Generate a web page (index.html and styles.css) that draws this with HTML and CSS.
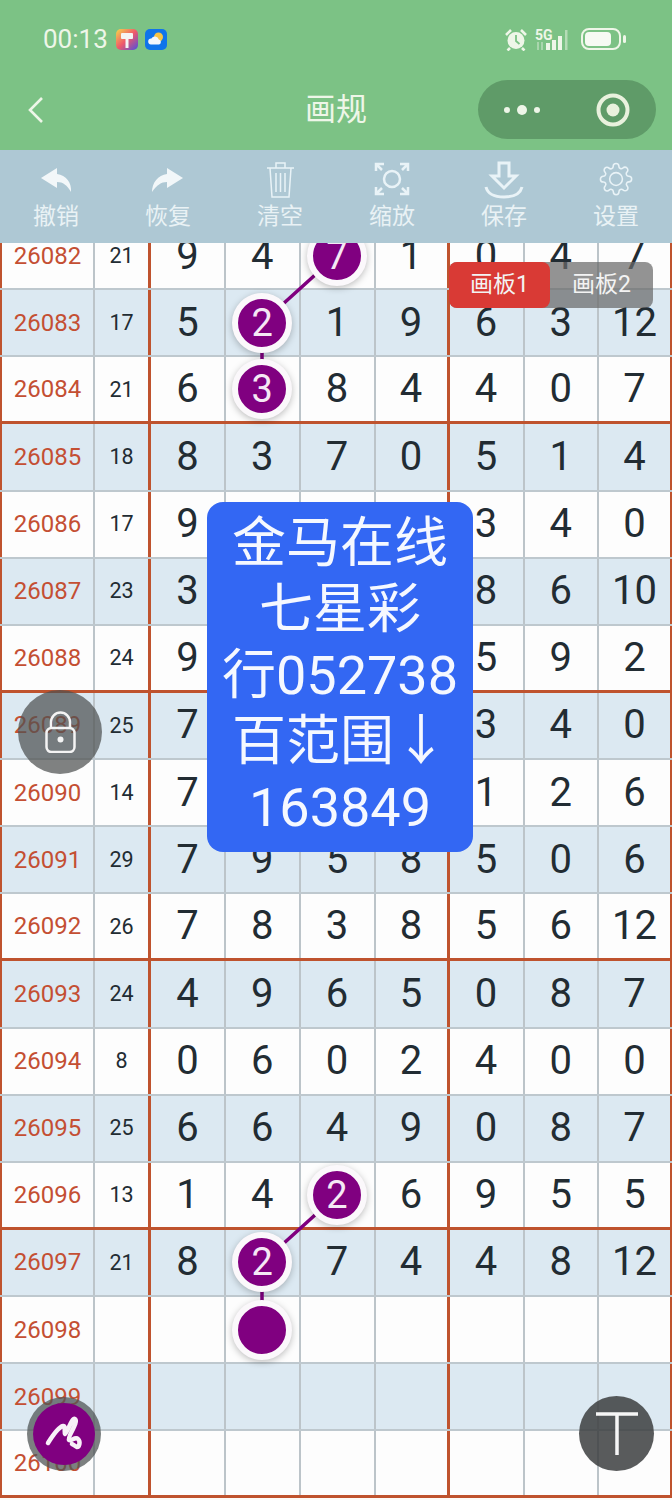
FILE: index.html
```html
<!DOCTYPE html>
<html lang="zh">
<head>
  <meta charset="UTF-8" />
  <title>画规</title>
  <link rel="stylesheet" href="styles.css">
</head>
<body>
  <div class="page">
    <div class="header">
      <div class="status">
        <div class="status-left">
          <span class="time">00:13</span>
          <svg class="app-icon" width="22" height="21" viewBox="0 0 22 21">
            <defs>
              <linearGradient id="appGrad" x1="0" y1="0" x2="1" y2="1">
                <stop offset="0" stop-color="#f5d94a"/>
                <stop offset="0.5" stop-color="#f0586a"/>
                <stop offset="1" stop-color="#4a50e0"/>
              </linearGradient>
            </defs>
            <rect width="22" height="21" rx="5" fill="url(#appGrad)"/>
            <rect x="5" y="4" width="12" height="6" rx="1" fill="#f4f4f4"/>
            <rect x="9.500" y="10" width="3" height="9" fill="#f4f4f4"/>
          </svg>
          <svg class="app-icon" width="22" height="21" viewBox="0 0 22 21">
            <rect width="22" height="21" rx="5" fill="#0f74ea"/>
            <circle cx="13.500" cy="8" r="4.500" fill="#f6c445"/>
            <path d="M6 15.500a3 3 0 0 1 .4-6 4 4 0 0 1 7.400 1 2.600 2.600 0 0 1 .4 5z" fill="#f2f7fc"/>
          </svg>
        </div>
        <div class="status-right">
          <svg width="22" height="23" viewBox="0 0 22 23">
            <circle cx="11" cy="12.500" r="8.500" fill="#eef6e8"/>
            <path d="M11 7v6l3.500 3" fill="none" stroke="#7cc285" stroke-width="1.800"/>
            <path d="M1 7l5-5M21 7l-5-5M5 20l-2.500 2.500M17 20l2.500 2.500" stroke="#eef6e8" stroke-width="2.600"/>
          </svg>
          <svg width="38" height="23" viewBox="0 0 38 23">
            <text x="0" y="12" class="net-label">5G</text>
            <g fill="#eef6e8">
              <rect x="11" y="15" width="4" height="7"/>
              <rect x="17" y="12" width="4" height="10"/>
              <rect x="23" y="8" width="4" height="14"/>
              <rect x="30" y="2" width="2.500" height="20" opacity="0.5"/>
              <rect x="2" y="14" width="2" height="8" opacity="0.4"/>
              <rect x="6" y="14" width="2" height="8" opacity="0.4"/>
            </g>
          </svg>
          <svg width="46" height="22" viewBox="0 0 46 22">
            <rect x="1" y="1" width="38" height="20" rx="7" fill="none" stroke="#eef6e8" stroke-width="2"/>
            <rect x="4" y="4" width="26" height="14" rx="4" fill="#f6faf3"/>
            <rect x="42" y="7" width="3" height="8" rx="1.500" fill="#eef6e8"/>
          </svg>
        </div>
      </div>
      <div class="nav">
        <svg class="back" width="18" height="28" viewBox="0 0 18 28">
          <path d="M15 2L3 14l12 12" fill="none" stroke="#eef6e8" stroke-width="2.600"/>
        </svg>
        <div class="title">画规</div>
        <div class="capsule">
          <svg width="40" height="12" viewBox="0 0 40 12">
            <circle cx="5" cy="6" r="3" fill="#eef6e8"/>
            <circle cx="20" cy="6" r="5" fill="#eef6e8"/>
            <circle cx="35" cy="6" r="3" fill="#eef6e8"/>
          </svg>
          <svg width="34" height="34" viewBox="0 0 34 34">
            <circle cx="17" cy="17" r="14.500" fill="none" stroke="#e9f1dd" stroke-width="4"/>
            <circle cx="17" cy="17" r="6.500" fill="#e9f1dd"/>
          </svg>
        </div>
      </div>
    </div>

    <div class="tools">
      <div class="tool">
        <svg width="40" height="38" viewBox="0 0 40 38">
          <path class="solid" d="M5 17L21 7v6c9 1 15 9 14 18-4-7-8-10-14-10v6z"/>
        </svg>
        <span>撤销</span>
      </div>
      <div class="tool">
        <svg width="40" height="38" viewBox="0 0 40 38">
          <path class="solid" d="M35 17L19 7v6C10 14 4 22 4 31c5-7 9-10 15-10v6z"/>
        </svg>
        <span>恢复</span>
      </div>
      <div class="tool">
        <svg width="40" height="38" viewBox="0 0 40 38">
          <path class="line" d="M7 7h27M16 7V2h9v5M10 7l2 29h17l2-29M16 12v19M20.500 12v19M25 12v19"/>
        </svg>
        <span>清空</span>
      </div>
      <div class="tool">
        <svg width="40" height="38" viewBox="0 0 40 38">
          <circle class="line thick" cx="20" cy="18" r="8"/>
          <path class="line thick" d="M4 10V3h8M4 3l6 6M36 10V3h-8M36 3l-6 6M4 26v7h8M4 33l6-6M36 26v7h-8M36 33l-6-6"/>
        </svg>
        <span>缩放</span>
      </div>
      <div class="tool">
        <svg width="40" height="38" viewBox="0 0 40 38">
          <path class="line heavy" d="M15 2h10v13h7L20 27 8 15h7zM2 26c2 8 10 10 18 10s16-2 18-10"/>
        </svg>
        <span>保存</span>
      </div>
      <div class="tool">
        <svg width="40" height="38" viewBox="0 0 40 38">
          <g transform="translate(3 1) scale(1.42)">
            <circle class="line gear" cx="12" cy="12" r="4.500"/>
            <path class="line gear" d="M19.400 15a1.650 1.650 0 0 0 .33 1.820l.06.06a2 2 0 0 1 0 2.830 2 2 0 0 1-2.830 0l-.06-.06a1.650 1.650 0 0 0-1.820-.33 1.650 1.650 0 0 0-1 1.510V21a2 2 0 0 1-2 2 2 2 0 0 1-2-2v-.09A1.650 1.650 0 0 0 9 19.400a1.650 1.650 0 0 0-1.820.33l-.06.06a2 2 0 0 1-2.830 0 2 2 0 0 1 0-2.830l.06-.06a1.650 1.650 0 0 0 .33-1.820 1.650 1.650 0 0 0-1.510-1H3a2 2 0 0 1-2-2 2 2 0 0 1 2-2h.09A1.650 1.650 0 0 0 4.600 9a1.650 1.650 0 0 0-.33-1.820l-.06-.06a2 2 0 0 1 0-2.830 2 2 0 0 1 2.830 0l.06.06a1.650 1.650 0 0 0 1.820.33H9a1.650 1.650 0 0 0 1-1.510V3a2 2 0 0 1 2-2 2 2 0 0 1 2 2v.09a1.650 1.650 0 0 0 1 1.510 1.650 1.650 0 0 0 1.820-.33l.06-.06a2 2 0 0 1 2.830 0 2 2 0 0 1 0 2.830l-.06.06a1.650 1.650 0 0 0-.33 1.820V9a1.650 1.650 0 0 0 1.510 1H21a2 2 0 0 1 2 2 2 2 0 0 1-2 2h-.09a1.650 1.650 0 0 0-1.510 1z"/>
          </g>
        </svg>
        <span>设置</span>
      </div>
    </div>

    <div class="board">
      <div class="rows">
        <svg class="links" width="672" height="1276">
          <path d="M336 33L262 100V167M336 973L262 1040V1107"/>
        </svg>
        <div class="row"><b>26082</b><i>21</i><span>9</span><span>4</span><span><em class="ball">7</em></span><span>1</span><span>0</span><span>4</span><span>7</span></div>
        <div class="row"><b>26083</b><i>17</i><span>5</span><span><em class="ball">2</em></span><span>1</span><span>9</span><span>6</span><span>3</span><span>12</span></div>
        <div class="row end"><b>26084</b><i>21</i><span>6</span><span><em class="ball">3</em></span><span>8</span><span>4</span><span>4</span><span>0</span><span>7</span></div>
        <div class="row"><b>26085</b><i>18</i><span>8</span><span>3</span><span>7</span><span>0</span><span>5</span><span>1</span><span>4</span></div>
        <div class="row"><b>26086</b><i>17</i><span>9</span><span></span><span></span><span></span><span>3</span><span>4</span><span>0</span></div>
        <div class="row"><b>26087</b><i>23</i><span>3</span><span></span><span></span><span></span><span>8</span><span>6</span><span>10</span></div>
        <div class="row end"><b>26088</b><i>24</i><span>9</span><span></span><span></span><span></span><span>5</span><span>9</span><span>2</span></div>
        <div class="row"><b>26089</b><i>25</i><span>7</span><span></span><span></span><span></span><span>3</span><span>4</span><span>0</span></div>
        <div class="row"><b>26090</b><i>14</i><span>7</span><span></span><span></span><span></span><span>1</span><span>2</span><span>6</span></div>
        <div class="row"><b>26091</b><i>29</i><span>7</span><span>9</span><span>5</span><span>8</span><span>5</span><span>0</span><span>6</span></div>
        <div class="row end"><b>26092</b><i>26</i><span>7</span><span>8</span><span>3</span><span>8</span><span>5</span><span>6</span><span>12</span></div>
        <div class="row"><b>26093</b><i>24</i><span>4</span><span>9</span><span>6</span><span>5</span><span>0</span><span>8</span><span>7</span></div>
        <div class="row"><b>26094</b><i>8</i><span>0</span><span>6</span><span>0</span><span>2</span><span>4</span><span>0</span><span>0</span></div>
        <div class="row"><b>26095</b><i>25</i><span>6</span><span>6</span><span>4</span><span>9</span><span>0</span><span>8</span><span>7</span></div>
        <div class="row end"><b>26096</b><i>13</i><span>1</span><span>4</span><span><em class="ball">2</em></span><span>6</span><span>9</span><span>5</span><span>5</span></div>
        <div class="row"><b>26097</b><i>21</i><span>8</span><span><em class="ball">2</em></span><span>7</span><span>4</span><span>4</span><span>8</span><span>12</span></div>
        <div class="row"><b>26098</b><i></i><span></span><span><em class="ball"></em></span><span></span><span></span><span></span><span></span><span></span></div>
        <div class="row"><b>26099</b><i></i><span></span><span></span><span></span><span></span><span></span><span></span><span></span></div>
        <div class="row end"><b>26100</b><i></i><span></span><span></span><span></span><span></span><span></span><span></span><span></span></div>
      </div>
    </div>

    <div class="tabs">
      <div class="tab active">画板1</div>
      <div class="tab">画板2</div>
    </div>

    <div class="notice">金马在线<br>七星彩<br>行052738<br>百范围↓<br>163849</div>

    <div class="float lock">
      <svg width="31" height="42" viewBox="0 0 31 42">
        <path d="M6 17V11a9.500 9.500 0 0 1 19 0v6" fill="none" stroke="#f4f4f4" stroke-width="2.500"/>
        <rect x="1.500" y="17" width="28" height="24" rx="5" fill="none" stroke="#f4f4f4" stroke-width="2.500"/>
        <circle cx="15.500" cy="28.500" r="3" fill="#f4f4f4"/>
      </svg>
    </div>

    <div class="float pen">
      <div class="pen-inner">
        <svg width="62" height="62" viewBox="0 0 62 62">
          <path d="M15 40C20 32 26 24 30 23c3-1 1 7 2 8 3-3 7-17 10-15 4 3-8 18-6 21 2 2 6-4 9-1 3 3 1 8-1 8-2-1-3-2-5-3" fill="none" stroke="#f8f0f8" stroke-width="4.500" stroke-linecap="round" stroke-linejoin="round"/>
        </svg>
      </div>
    </div>

    <div class="float top">
      <svg width="44" height="44" viewBox="0 0 44 44">
        <path d="M1 2h42M22 2v41" fill="none" stroke="#f6f6f6" stroke-width="3.500"/>
      </svg>
    </div>
  </div>
</body>
</html>
```

FILE: styles.css
```css
html, body {
  margin: 0;
  padding: 0;
}

body {
  font-family: Roboto, 'Noto Sans CJK SC', sans-serif;
  color: #222c33;
}

.page {
  position: relative;
  display: flex;
  flex-direction: column;
  width: 672px;
  height: 1500px;
  overflow: hidden;
  background: #fdfbf8;
}

/* green header */
.header {
  height: 150px;
  background: #7cc285;
  color: #eef6e8;
}

.status {
  display: flex;
  justify-content: space-between;
  align-items: center;
  height: 78px;
  padding: 0 45px 2px 43px;
}

.status-left,
.status-right {
  display: flex;
  align-items: center;
}

.status-right {
  gap: 8px;
}

.time {
  font-size: 26px;
  margin-right: 8px;
}

.app-icon {
  margin-right: 7px;
}

.net-label {
  font-size: 14px;
  font-weight: 700;
  fill: #eef6e8;
}

.nav {
  display: grid;
  grid-template-columns: 1fr auto 1fr;
  align-items: center;
  height: 59px;
  padding: 0 16px;
}

.back {
  margin-left: 11px;
}

.title {
  font-size: 31px;
  line-height: 59px;
}

.capsule {
  justify-self: end;
  display: flex;
  justify-content: space-between;
  align-items: center;
  width: 178px;
  height: 59px;
  padding: 0 26px 0 24px;
  box-sizing: border-box;
  border-radius: 30px;
  background: #5f9b68;
}

/* toolbar */
.tools {
  display: grid;
  grid-template-columns: repeat(6, 1fr);
  height: 93px;
  padding-top: 11px;
  box-sizing: border-box;
  background: #aec8d4;
}

.tool {
  display: flex;
  flex-direction: column;
  align-items: center;
  color: #e9f2f5;
  font-size: 23px;
  line-height: 36px;
}

.tool svg {
  display: block;
}

.solid {
  fill: #f2f7f9;
}

.line {
  fill: none;
  stroke: #e9f3f7;
  stroke-width: 1.5;
}

.line.thick {
  stroke-width: 2.5;
}

.line.heavy {
  stroke-width: 3;
}

.line.gear {
  stroke-width: 1.1;
}

/* number board */
.board {
  flex: 1;
  overflow: hidden;
}

.rows {
  position: relative;
  margin-top: -20px;
}

.links {
  position: absolute;
  top: 0;
  left: 0;
  z-index: 1;
}

.links path {
  fill: none;
  stroke: #800080;
  stroke-width: 3.5;
}

.row {
  display: grid;
  grid-template-columns: 93px 55px 76px 74.5px 75px 73px 76px 74.5px 1fr;
  height: 67.13px;
  box-sizing: border-box;
  border-bottom: 2px solid #bec8ce;
  background: #fdfdfd;
}

.row:nth-child(odd) {
  background: #dce9f2;
}

.row.end {
  border-bottom: 3px solid #bf532e;
}

.row > * {
  display: flex;
  justify-content: center;
  align-items: center;
  box-sizing: border-box;
  border-left: 2px solid #bcc4c9;
  font-style: normal;
  font-weight: 400;
  font-size: 40px;
  line-height: 1;
}

.row > b {
  border-left: 2.5px solid #bf532e;
  color: #c44f33;
  font-size: 24px;
}

.row > i {
  font-size: 21.5px;
}

.row > :nth-child(3),
.row > :nth-child(7) {
  border-left: 3px solid #bf532e;
}

.row > :last-child {
  border-right: 2px solid #bf532e;
}

.ball {
  position: relative;
  z-index: 2;
  display: flex;
  justify-content: center;
  align-items: center;
  flex: none;
  width: 60px;
  height: 60px;
  box-sizing: border-box;
  border: 6px solid #fbf8fb;
  border-radius: 50%;
  background: #800080;
  box-shadow: 0 2px 7px rgba(0, 0, 0, 0.25);
  color: #f5e8f5;
  font-style: normal;
  font-size: 38px;
}

/* things lying over the board */
.tabs {
  position: absolute;
  top: 262px;
  left: 449px;
  z-index: 3;
  display: flex;
  width: 204px;
  height: 46px;
  border-radius: 8px;
  background: rgba(105, 105, 105, 0.72);
}

.tab {
  flex: 1;
  border-radius: 8px;
  color: #f3f3f3;
  font-size: 23px;
  line-height: 46px;
  text-align: center;
}

.tab.active {
  flex: none;
  width: 101px;
  background: #d93a35;
}

.notice {
  position: absolute;
  top: 502px;
  left: 207px;
  z-index: 3;
  width: 266px;
  height: 350px;
  padding: 9px 0;
  box-sizing: border-box;
  border-radius: 16px;
  background: #3367f3;
  color: #f5f8ff;
  font-size: 54px;
  line-height: 66px;
  text-align: center;
  white-space: nowrap;
}

.float {
  position: absolute;
  z-index: 3;
  display: flex;
  justify-content: center;
  align-items: center;
  border-radius: 50%;
}

.lock {
  top: 690px;
  left: 18px;
  width: 84px;
  height: 84px;
  background: rgba(78, 80, 80, 0.72);
}

.pen {
  top: 1397px;
  left: 27px;
  width: 74px;
  height: 74px;
  background: rgba(80, 85, 85, 0.75);
}

.pen-inner {
  width: 62px;
  height: 62px;
  border-radius: 50%;
  background: #800080;
}

.top {
  top: 1396px;
  left: 579px;
  width: 75px;
  height: 75px;
  background: rgba(60, 62, 64, 0.85);
}
```
